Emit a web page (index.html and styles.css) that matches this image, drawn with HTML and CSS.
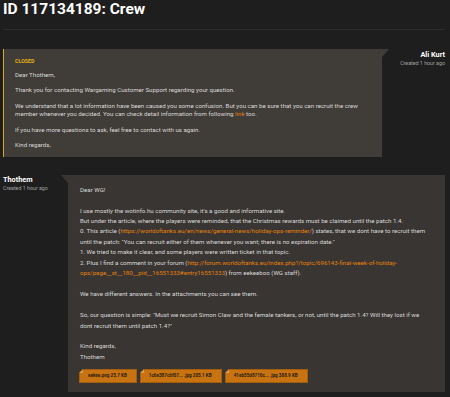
FILE: index.html
```html
<!DOCTYPE html>
<html lang="en">
<head>
    <meta charset="UTF-8">
    <title>ID 117134189: Crew</title>
    <link rel="stylesheet" href="styles.css">
</head>
<body>

<div class="ticket">
    <h1 class="ticket-title">ID 117134189: Crew</h1>

    <div class="message staff">
        <div class="author">
            <div class="author-name">Ali Kurt</div>
            <div class="author-date">Created 1 hour ago</div>
        </div>
        <div class="bubble">
            <div class="status">CLOSED</div>
            <p>Dear Thothem,</p>
            <p>Thank you for contacting Wargaming Customer Support regarding your question.</p>
            <p>We understand that a lot information have been caused you some confusion. But you can be sure that you can recruit the crew member whenever you decided. You can check detail information from following <a href="#">link</a> too.</p>
            <p>If you have more questions to ask, feel free to contact with us again.</p>
            <p>Kind regards,</p>
        </div>
    </div>

    <div class="message user">
        <div class="author">
            <div class="author-name">Thothem</div>
            <div class="author-date">Created 1 hour ago</div>
        </div>
        <div class="bubble">
            <div class="body">
                Dear WG!<br>
                <br>
                I use mostly the wotinfo.hu community site, it's a good and informative site.<br>
                But under the article, where the players were reminded, that the Christmas rewards must be claimed until the patch 1.4.<br>
                0. This article (<a href="#">https://worldoftanks.eu/en/news/general-news/holiday-ops-reminder/</a>) states, that we dont have to recruit them until the patch: "You can recruit either of them whenever you want; there is no expiration date."<br>
                1. We tried to make it clear, and some players were written ticket in that topic.<br>
                2. Plus I find a comment in your forum (<a href="#">http://forum.worldoftanks.eu/index.php?/topic/696143-final-week-of-holiday-ops/page__st__180__pid__16551333#entry16551333</a>) from eekeeboo (WG staff).<br>
                <br>
                We have different answers. In the attachments you can see them.<br>
                <br>
                So, our question is simple: "Must we recruit Simon Claw and the female tankers, or not, until the patch 1.4? Will they lost if we dont recruit them until patch 1.4?"<br>
                <br>
                Kind regards,<br>
                Thothem
            </div>
            <div class="attachments">
                <a class="file" href="#">eekee.png 25.7 KB</a>
                <a class="file" href="#">1c6e387c6f07... .jpg 205.1 KB</a>
                <a class="file" href="#">41eb55d8710c... .jpg 388.9 KB</a>
            </div>
        </div>
    </div>
</div>

</body>
</html>
```

FILE: styles.css
```css
body {
    margin: 0;
    font-family: Roboto, 'Liberation Sans', sans-serif;
    color: #d8d8d8;
    background-color: #1e1e1e;
}
a {
    color: #e5810f;
    text-decoration: none;
}
.ticket {
    padding: 0 5px 8px 3px;
}
.ticket-title {
    margin: 0;
    height: 29px;
    font-size: 15.5px;
    line-height: 18px;
    font-weight: 700;
    color: #ffffff;
    border-bottom: 1px solid #2c2c2c;
}
.message {
    display: flex;
    align-items: flex-start;
}
.message.staff {
    flex-direction: row-reverse;
    margin-top: 19px;
}
.message.user {
    margin-top: 18px;
}
.author {
    width: 58px;
    flex-shrink: 0;
}
.staff .author {
    width: 56px;
    text-align: right;
    padding-top: 1px;
}
.author-name {
    font-size: 7.3px;
    font-weight: 700;
    color: #ffffff;
    line-height: 9px;
}
.author-date {
    font-size: 5.3px;
    color: #a0a0a0;
    line-height: 8px;
}
.bubble {
    position: relative;
    flex: 1;
    font-size: 6.15px;
}
.staff .bubble {
    margin-right: 7px;
    padding: 8.5px 12px 7.5px 11px;
    background-color: #403c37;
    border-left: 1px solid #d9a91a;
}
.user .bubble {
    margin-left: 7px;
    padding: 9.8px 14px 9px 12px;
    background-color: #383532;
}
.staff .bubble::after {
    content: '';
    position: absolute;
    top: 0;
    right: -7px;
    border-top: 8px solid #403c37;
    border-right: 7px solid transparent;
}
.user .bubble::before {
    content: '';
    position: absolute;
    top: 0;
    left: -7px;
    border-top: 8px solid #383532;
    border-left: 7px solid transparent;
}
.status {
    font-size: 5.3px;
    line-height: 7px;
    font-weight: 700;
    color: #e0b014;
    margin-bottom: 6.3px;
}
.bubble p {
    margin: 0 0 7.2px;
    line-height: 8.3px;
}
.bubble p:last-child {
    margin-bottom: 0;
}
.body {
    line-height: 10.45px;
}
.attachments {
    display: flex;
    gap: 3px;
    margin-top: 6.8px;
    margin-left: -1px;
}
.file {
    position: relative;
    padding: 0 9px 0 8px;
    height: 14px;
    line-height: 12px;
    font-size: 4.6px;
    font-weight: 700;
    color: #2a1d0c;
    background-color: #c87312;
    border: 1px solid #a35d0c;
    box-sizing: border-box;
}
.file::before {
    content: '';
    position: absolute;
    top: -1px;
    left: -1px;
    border-top: 4px solid #383532;
    border-right: 4px solid #e09a40;
}
```
